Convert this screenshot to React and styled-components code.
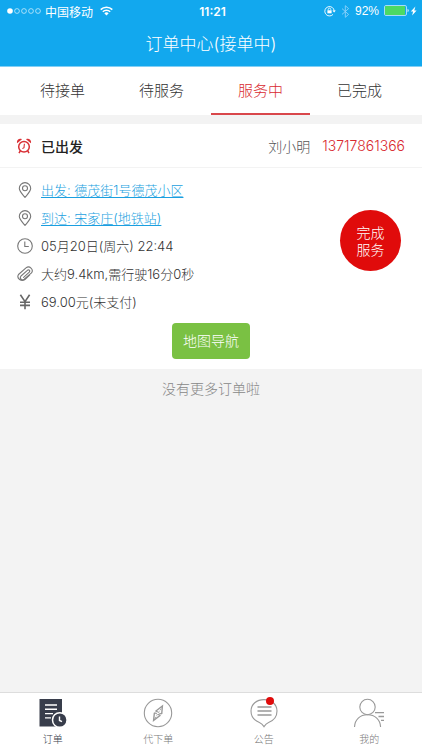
import React, { useState } from "react";
import styled, { createGlobalStyle, css } from "styled-components";

const tabs = ["待接单", "待服务", "服务中", "已完成"];

const menus = [
  { name: "订单", Icon: OrderIcon },
  { name: "代下单", Icon: CompassIcon },
  { name: "公告", Icon: NoticeIcon, badge: true },
  { name: "我的", Icon: UserIcon },
];

const App = () => {
  const [tab, setTab] = useState("服务中");
  const [menu, setMenu] = useState("订单");

  return (
    <Page>
      <GlobalStyle />
      <Header>
        <StatusBar>
          <StatusSide>
            <SignalIcon />
            <span>中国移动</span>
            <WifiIcon />
          </StatusSide>
          <Clock>11:21</Clock>
          <StatusSide $end>
            <LockIcon />
            <BluetoothIcon />
            <Percent>92%</Percent>
            <BatteryIcon />
          </StatusSide>
        </StatusBar>
        <Title>订单中心(接单中)</Title>
      </Header>
      <Tabs role="tablist">
        {tabs.map((name) => (
          <Tab
            key={name}
            type="button"
            role="tab"
            aria-selected={tab === name}
            $active={tab === name}
            onClick={() => setTab(name)}
          >
            {name}
          </Tab>
        ))}
      </Tabs>
      <Content>
        <Card>
          <CardHead>
            <AlarmIcon />
            <State>已出发</State>
            <Customer>刘小明</Customer>
            <Phone href="tel:13717861366">13717861366</Phone>
          </CardHead>
          <CardBody>
            <InfoList>
              <InfoRow>
                <PinIcon />
                <InfoText>
                  <Place href="#from">出发: 德茂街1号德茂小区</Place>
                </InfoText>
              </InfoRow>
              <InfoRow>
                <PinIcon />
                <InfoText>
                  <Place href="#to">到达: 宋家庄(地铁站)</Place>
                </InfoText>
              </InfoRow>
              <InfoRow>
                <TimeIcon />
                <InfoText>05月20日(周六) 22:44</InfoText>
              </InfoRow>
              <InfoRow>
                <ClipIcon />
                <InfoText>大约9.4km,需行驶16分0秒</InfoText>
              </InfoRow>
              <InfoRow>
                <YenIcon />
                <InfoText>69.00元(未支付)</InfoText>
              </InfoRow>
            </InfoList>
            <FinishButton type="button">
              完成
              <br />
              服务
            </FinishButton>
          </CardBody>
          <CardFoot>
            <MapButton type="button">地图导航</MapButton>
          </CardFoot>
        </Card>
        <Empty>没有更多订单啦</Empty>
      </Content>
      <Menu>
        {menus.map(({ name, Icon, badge }) => (
          <MenuItem
            key={name}
            type="button"
            $active={menu === name}
            onClick={() => setMenu(name)}
          >
            <MenuIcon>
              <Icon />
              {badge && <Badge />}
            </MenuIcon>
            {name}
          </MenuItem>
        ))}
      </Menu>
    </Page>
  );
};

export default App;

function SignalIcon() {
  return (
    <svg width="35" height="8" viewBox="0 0 35 8" fill="none" stroke="#fff">
      <circle cx="3" cy="4" r="2.8" fill="#fff" stroke="none" />
      {[10, 17, 24, 31].map((x) => (
        <circle key={x} cx={x} cy="4" r="2.4" strokeWidth="0.6" />
      ))}
    </svg>
  );
}

function WifiIcon() {
  return (
    <Wifi width="13" height="10" viewBox="0 0 13 10" fill="none" stroke="#fff">
      <path d="M0.7 3.6a8.2 8.2 0 0 1 11.6 0" strokeWidth="1.6" />
      <path d="M2.8 5.7a5.3 5.3 0 0 1 7.4 0" strokeWidth="1.5" />
      <path d="M6.5 9.6 4.3 7.3a3.2 3.2 0 0 1 4.4 0Z" fill="#fff" stroke="none" />
    </Wifi>
  );
}

function LockIcon() {
  return (
    <svg width="12" height="12" viewBox="0 0 12 12" fill="none" stroke="#fff">
      <path d="M9 9.4A4.7 4.7 0 1 1 10.2 6" strokeWidth="0.9" />
      <path d="m8.4 5.4 3.4 0-1.7 2.2Z" fill="#fff" stroke="none" />
      <rect x="3.4" y="5.3" width="4.2" height="3" fill="#fff" stroke="none" />
      <path d="M4.2 5.4V4.5a1.3 1.3 0 0 1 2.6 0v.9" strokeWidth="0.8" />
    </svg>
  );
}

function BluetoothIcon() {
  return (
    <svg
      width="9"
      height="13"
      viewBox="0 0 9 13"
      fill="none"
      stroke="#8fd3fa"
      strokeWidth="0.9"
    >
      <path d="m1 3.6 6.6 5.8-3.3 2.9V.7l3.3 2.9L1 9.4" />
    </svg>
  );
}

function BatteryIcon() {
  return (
    <svg width="34" height="12" viewBox="0 0 34 12">
      <rect
        x="0.5"
        y="0.5"
        width="22"
        height="10"
        rx="1.5"
        fill="none"
        stroke="#a5dcfb"
      />
      <rect x="1" y="1" width="20" height="9" rx="1" fill="#4cd964" />
      <path d="M23.6 3.8c1.4.4 1.4 3 0 3.4Z" fill="#fff" />
      <path d="m31.4 1.4-4.6 5h2.3l-1 4 4.5-5h-2.3Z" fill="#fff" />
    </svg>
  );
}

function AlarmIcon() {
  return (
    <svg
      width="16"
      height="16"
      viewBox="0 0 16 16"
      fill="none"
      stroke="#d93136"
      strokeWidth="1.5"
    >
      <circle cx="8" cy="8.8" r="5.3" />
      <path d="M8.4 5.8 8 9.6l-1.6 1" strokeWidth="1.1" />
      <path d="m4.4 12.6-1.4 2.5M11.6 12.6l1.4 2.5" />
      <path
        d="M1.1 5.2C.2 2.2 3-.2 6 1.2ZM14.9 5.2c.9-3-1.9-5.4-4.9-4Z"
        fill="#d93136"
        stroke="none"
      />
    </svg>
  );
}

function PinIcon() {
  return (
    <svg
      width="16"
      height="16"
      viewBox="0 0 16 16"
      fill="none"
      stroke="#777"
      strokeWidth="1.1"
    >
      <path d="M8 15.3C5.5 12.2 2.3 9.5 2.3 6.3a5.7 5.7 0 0 1 11.4 0c0 3.2-3.2 5.9-5.7 9Z" />
      <circle cx="8" cy="6.2" r="2.5" />
    </svg>
  );
}

function TimeIcon() {
  return (
    <svg
      width="16"
      height="16"
      viewBox="0 0 16 16"
      fill="none"
      stroke="#777"
      strokeWidth="1.1"
    >
      <circle cx="8" cy="8" r="7.3" />
      <path d="M7.8 3.5v5h4" />
    </svg>
  );
}

function ClipIcon() {
  return (
    <svg
      width="16"
      height="16"
      viewBox="0 0 16 16"
      fill="none"
      stroke="#777"
      strokeWidth="1.1"
      strokeLinecap="round"
      strokeLinejoin="round"
    >
      <path d="m12.6 9.2-4.4 4.1C4.5 16.4-.8 12.4 1.5 8.5L9 1.9c3.5-2.7 8 1.5 5.5 5l-7.3 6.3c-2.5 1.8-5-1-3.2-3.2l6.4-5.7c1.6-1.2 3 .4 1.9 1.9l-5.7 5.1" />
    </svg>
  );
}

function YenIcon() {
  return (
    <svg
      width="16"
      height="16"
      viewBox="0 0 16 16"
      fill="none"
      stroke="#666"
      strokeWidth="1.6"
    >
      <path d="M3.4.8 8 7.6 12.6.8M8 7.4v7.8M3 8.2h10M3 11.4h10" />
    </svg>
  );
}

function OrderIcon() {
  return (
    <svg width="30" height="30" viewBox="0 0 30 30" fill="none">
      <path d="M1.5 1H24v27.5H1.5Z" fill="#383d4b" />
      <path
        d="M7 7h12M7 11.3h12M7 15.6h8M7 19.9h6"
        stroke="#fff"
        strokeWidth="1.4"
      />
      <circle
        cx="21.8"
        cy="22"
        r="7.3"
        fill="#383d4b"
        stroke="#fff"
        strokeWidth="1.5"
      />
      <path d="M21.5 18.5v4l2.5 1.2" stroke="#fff" strokeWidth="1.4" />
    </svg>
  );
}

function CompassIcon() {
  return (
    <svg width="30" height="30" viewBox="0 0 30 30" fill="none" stroke="#999">
      <circle cx="15" cy="15" r="13.7" strokeWidth="1.1" />
      <path
        d="M12.6 13.2 19.4 8l-.7 8M17.4 17.2l-6.8 5.2.8-7.6"
        strokeWidth="1.4"
      />
      <path
        d="m12.6 13.2 2.6.8M18.7 16l-2.4-.8M11.4 14.8l2.4.8M17.4 17.2l-2.4-.8"
        strokeWidth="1.2"
      />
      <path d="m18 10.6-5.8 9.4" strokeWidth="0.8" strokeDasharray="2 1.2" />
    </svg>
  );
}

function NoticeIcon() {
  return (
    <svg
      width="30"
      height="30"
      viewBox="0 0 30 30"
      fill="none"
      stroke="#999"
      strokeWidth="1.1"
    >
      <path d="M15 28.6c-1.2-2-2.5-3.4-4.6-4.2C5.2 22.5 2 18 2 13 2 6.3 7.7 1.6 15 1.6S28 6.3 28 13c0 5-3.2 9.5-8.4 11.4-2.1.8-3.4 2.2-4.6 4.2Z" />
      <path d="M8.5 9h14M8.5 13h14M8.5 17h14" strokeWidth="1.4" />
    </svg>
  );
}

function UserIcon() {
  return (
    <svg
      width="32"
      height="30"
      viewBox="0 0 32 30"
      fill="none"
      stroke="#999"
      strokeWidth="1.1"
    >
      <circle cx="14.5" cy="9" r="7.7" />
      <path d="M1.5 29C1.8 21.5 7 16.8 14.5 16.8S27.3 21.5 27.6 29" />
      <path d="M22 14.6h9M25.5 18.5H31M28 22.4h3" strokeWidth="1.4" />
    </svg>
  );
}

const GlobalStyle = createGlobalStyle`
  * {
    box-sizing: border-box;
  }
  body {
    margin: 0;
    background-color: #f3f3f3;
    color: #333;
    font-family: Inter, "Noto Sans CJK SC", sans-serif;
    font-size: 14px;
    font-weight: 300;
  }
  button {
    padding: 0;
    border: none;
    background: none;
    color: inherit;
    font: inherit;
    cursor: pointer;
  }
  svg {
    display: block;
    flex-shrink: 0;
  }
`;

const Page = styled.div`
  display: flex;
  flex-direction: column;
  min-height: 100vh;
`;

const Header = styled.header`
  background-color: #12a8ee;
  border-bottom: 1px solid #82cff5;
  color: #fff;
`;

const StatusBar = styled.div`
  display: flex;
  align-items: center;
  height: 22px;
  padding: 0 4px 0 7px;
  font-size: 12px;
  font-weight: 400;
`;

const StatusSide = styled.div`
  display: flex;
  flex: 1;
  align-items: center;
  gap: 3px;
  ${(props) =>
    props.$end &&
    css`
      justify-content: flex-end;
      gap: 5px;
    `};
`;

const Wifi = styled.svg`
  margin-left: 4px;
`;

const Clock = styled.div`
  font-weight: 600;
`;

const Percent = styled.span`
  font-family: "Liberation Sans", sans-serif;
`;

const Title = styled.h1`
  margin: 0;
  height: 44px;
  font-size: 17px;
  font-weight: 300;
  line-height: 44px;
  text-align: center;
`;

const Tabs = styled.div`
  display: flex;
  padding: 0 13px;
  background-color: #fff;
`;

const Tab = styled.button`
  flex: 1;
  height: 48px;
  padding-bottom: 2px;
  border-bottom: 2px solid transparent;
  font-size: 15px;
  ${(props) =>
    props.$active &&
    css`
      border-color: #d9474b;
      color: #d92a2f;
    `};
`;

const Content = styled.main`
  flex: 1;
  padding-top: 9px;
`;

const Card = styled.section`
  background-color: #fff;
`;

const CardHead = styled.div`
  display: flex;
  align-items: center;
  height: 44px;
  padding: 0 17px 0 16px;
  border-bottom: 1px solid #f3f3f3;
`;

const State = styled.strong`
  flex: 1;
  margin-left: 9px;
  color: #222;
  font-weight: 500;
`;

const Customer = styled.span`
  color: #555;
`;

const Phone = styled.a`
  margin-left: 12px;
  color: #d92a2f;
  text-decoration: none;
`;

const CardBody = styled.div`
  display: flex;
  align-items: center;
  justify-content: space-between;
  padding: 8px 21px 0 17px;
`;

const InfoList = styled.ul`
  margin: 0;
  padding: 0;
  list-style: none;
`;

const InfoRow = styled.li`
  display: flex;
  align-items: center;
  gap: 8px;
  height: 28px;
  font-size: 13px;
`;

const InfoText = styled.span`
  padding-bottom: 2px;
`;

const Place = styled.a`
  color: #1a9fe0;
  text-underline-offset: 2px;
`;

const FinishButton = styled.button`
  width: 61px;
  height: 61px;
  margin-bottom: 12px;
  padding-top: 2px;
  border-radius: 50%;
  background-color: #e00b0b;
  color: #fff;
  line-height: 17px;
`;

const CardFoot = styled.div`
  display: flex;
  justify-content: center;
  padding: 7px 0 10px;
`;

const MapButton = styled.button`
  height: 36px;
  padding: 0 11px 2px;
  border-radius: 4px;
  background-color: #7ac143;
  color: #fff;
`;

const Empty = styled.p`
  margin: 0;
  color: #888;
  line-height: 40px;
  text-align: center;
`;

const Menu = styled.nav`
  display: flex;
  background-color: #fff;
  border-top: 1px solid #ddd;
`;

const MenuItem = styled.button`
  display: flex;
  flex: 1;
  flex-direction: column;
  align-items: center;
  gap: 3px;
  height: 57px;
  padding-top: 5px;
  color: #777;
  font-size: 10px;
  ${(props) =>
    props.$active &&
    css`
      color: #383d4b;
    `};
`;

const MenuIcon = styled.span`
  position: relative;
`;

const Badge = styled.span`
  position: absolute;
  top: -1px;
  right: 5px;
  width: 8px;
  height: 8px;
  border-radius: 50%;
  background-color: #e00b0b;
`;
